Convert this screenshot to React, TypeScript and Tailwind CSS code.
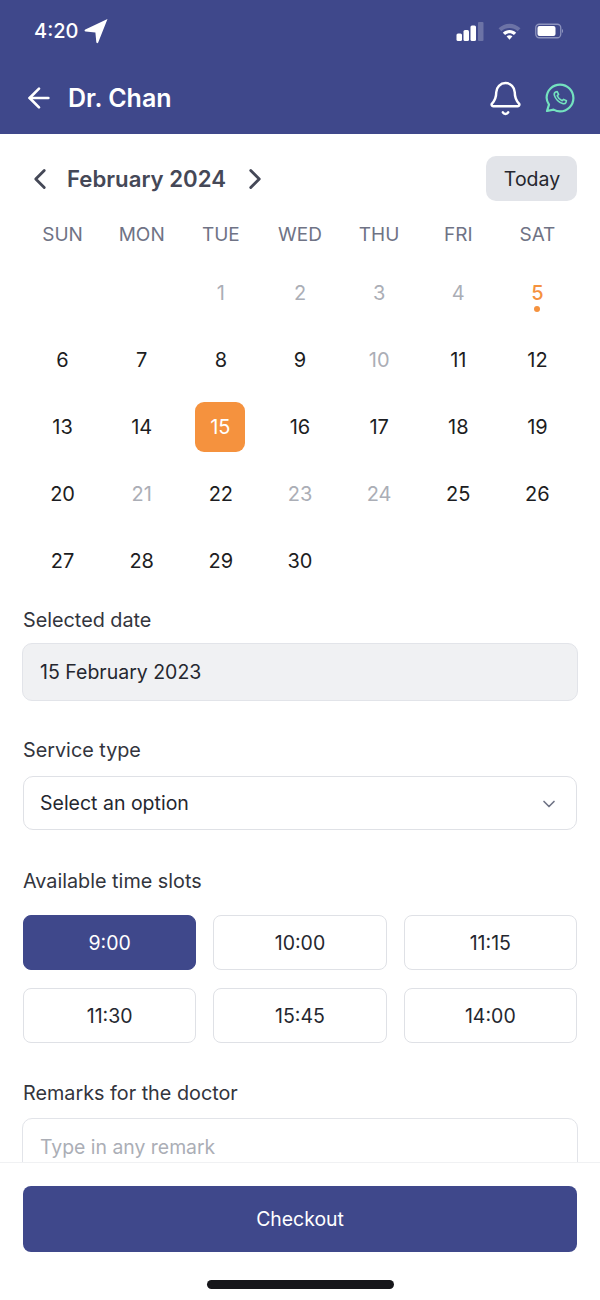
import { ArrowLeft, Bell, ChevronDown, ChevronLeft, ChevronRight } from 'lucide-react'

const weekDays = ['SUN', 'MON', 'TUE', 'WED', 'THU', 'FRI', 'SAT']
const disabledDays = [1, 2, 3, 4, 10, 21, 23, 24]
const timeSlots = ['9:00', '10:00', '11:15', '11:30', '15:45', '14:00']

function StatusBar() {
  return (
    <div className="flex h-[62px] items-center justify-between pl-[34px] pr-[36px] text-white">
      <div className="flex items-center gap-[6px]">
        <span className="text-[20px] font-medium leading-none">4:20</span>
        <svg viewBox="0 0 24 26" className="h-[26px] w-[24px]" fill="currentColor">
          <path d="M23.5 1 L14.2 24.4 C13.7 25.6 12.4 25.3 12.3 24 L11.4 14.4 L1.6 13.4 C0.4 13.3 0.2 12 1.3 11.4 Z" />
        </svg>
      </div>
      <div className="flex items-center gap-[14px]">
        <svg viewBox="0 0 28 19" className="ml-[1px] h-[19px] w-[28px]">
          <rect x="0.5" y="11.5" width="5.5" height="7.5" rx="1.5" fill="#fff" />
          <rect x="7.5" y="8" width="5.5" height="11" rx="1.5" fill="#fff" />
          <rect x="14.5" y="3.5" width="5.5" height="15.5" rx="1.5" fill="#fff" />
          <rect x="22" y="0" width="5.5" height="19" rx="1" fill="#6c73a6" />
        </svg>
        <svg viewBox="0 0 22 18" className="h-[19px] w-[23px]">
          <path d="M0.5 6 C6.3 0 15.7 0 21.5 6 L18.8 8.8 C14.4 4.6 7.6 4.6 3.2 8.8 Z" fill="#6c73a6" />
          <path d="M4.6 10.2 C8.2 6.8 13.8 6.8 17.4 10.2 L15.2 12.4 C12.6 10.2 9.4 10.2 6.8 12.4 Z" fill="#fff" />
          <path d="M8.2 13.6 C10 12.2 12 12.2 13.8 13.6 L11 17 Z" fill="#fff" />
        </svg>
        <svg viewBox="0 0 29 16" className="h-[16px] w-[29px]">
          <rect x="0.75" y="1.25" width="25" height="13.5" rx="3.5" fill="none" stroke="#8d93bd" strokeWidth="1.3" />
          <rect x="2.5" y="3" width="18" height="10" rx="2" fill="#fff" />
          <path d="M27 6 C28.4 6.4 28.4 9.6 27 10 Z" fill="#8d93bd" />
        </svg>
      </div>
    </div>
  )
}

function AppHeader() {
  return (
    <div className="flex h-[72px] items-center justify-between pl-[23px] pr-[24px] text-white">
      <div className="flex items-center gap-[13px]">
        <ArrowLeft size={32} strokeWidth={2} />
        <span className="text-[25px] font-semibold leading-none">Dr. Chan</span>
      </div>
      <div className="flex items-center gap-[20px]">
        <Bell size={37} strokeWidth={1.6} />
        <svg
          viewBox="0 0 32 32"
          className="h-[32px] w-[32px] text-[#74e2bf]"
          fill="none"
          stroke="currentColor"
          strokeWidth="2.2"
          strokeLinejoin="round"
          strokeLinecap="round"
        >
          <path d="M3 29 L5 22.6 C3.6 20.4 2.6 18.4 2.6 15.8 C2.6 8.6 8.6 2.6 16 2.6 C23.4 2.6 29.4 8.6 29.4 16 C29.4 23.4 23.4 29.4 16 29.4 C13.6 29.4 11.4 28.6 9.6 27.6 Z" />
          <path d="M11.6 10 C10.4 10.6 10 12 10.4 13.4 C11.4 17 15 20.6 18.6 21.6 C20 22 21.4 21.6 22 20.4 L22.4 18.8 L19.6 17.4 L18.2 18.8 C16.2 18 14 15.8 13.2 13.8 L14.6 12.4 L13.2 9.6 Z" strokeWidth="1.6" />
        </svg>
      </div>
    </div>
  )
}

function Calendar() {
  const days: (number | null)[] = [null, null, ...Array.from({ length: 30 }, (_, i) => i + 1)]

  return (
    <div>
      <div className="flex h-[45px] items-center justify-between">
        <div className="flex items-center text-[#454857]">
          <ChevronLeft size={34} strokeWidth={2} />
          <span className="ml-[10px] pt-[2px] text-[22.2px] font-semibold leading-none">February 2024</span>
          <ChevronRight size={34} strokeWidth={2} className="ml-[12px]" />
        </div>
        <button
          type="button"
          className="flex h-[45px] w-[91px] items-center justify-center rounded-[10px] bg-[#e2e4e9] pl-[1px] pt-[2px] text-[19.5px] text-[#25272f]"
        >
          Today
        </button>
      </div>
      <div className="mt-[20px] grid grid-cols-7">
        {weekDays.map((day) => (
          <div key={day} className="text-center text-[19px] leading-[28px] text-[#6f7385]">
            {day}
          </div>
        ))}
      </div>
      <div className="mt-[11px] grid grid-cols-7 auto-rows-[66.8px]">
        {days.map((day, index) => {
          if (day === null) return <div key={index} />
          if (day === 15) {
            return (
              <div key={day} className="flex items-center justify-center pr-[2px]">
                <div className="flex h-[50px] w-[50px] items-center justify-center rounded-[9px] bg-[#f5923e] pl-[1px] text-[20px] text-white">
                  15
                </div>
              </div>
            )
          }
          if (day === 5) {
            return (
              <div key={day} className="relative flex items-center justify-center text-[20px] font-medium text-[#f5923e]">
                5
                <span className="absolute left-1/2 top-[46px] h-[6px] w-[6px] -translate-x-1/2 rounded-full bg-[#f5923e]" />
              </div>
            )
          }
          const muted = disabledDays.includes(day)
          return (
            <div
              key={day}
              className={`flex items-center justify-center text-[20px] ${muted ? 'text-[#abaeb6]' : 'text-[#1c1d22]'}`}
            >
              {day}
            </div>
          )
        })}
      </div>
    </div>
  )
}

export default function App() {
  return (
    <div
      className="flex h-[1300px] w-[600px] flex-col overflow-hidden bg-white"
      style={{ fontFamily: 'Inter, "Liberation Sans", sans-serif' }}
    >
      <div className="bg-[#3f488b]">
        <StatusBar />
        <AppHeader />
      </div>

      <div className="min-h-0 flex-1 overflow-hidden">
        <div className="px-[23px] pt-[22px]">
          <Calendar />
        </div>

        <div className="mt-[12px] px-[23px]">
          <label className="block text-[19.8px] leading-[28px] text-[#33353d]">Selected date</label>
          <div className="ml-[-1px] mr-[-1px] mt-[9px] flex h-[58px] items-center rounded-[10px] border border-[#e2e4e9] bg-[#f0f1f3] pl-[17px] pr-[17px] pt-[2px] text-[19.5px] text-[#25272f]">
            15 February 2023
          </div>
        </div>

        <div className="mt-[35px] px-[23px]">
          <label className="block text-[19.8px] leading-[28px] text-[#33353d]">Service type</label>
          <div className="mt-[12px] flex h-[54px] items-center justify-between rounded-[10px] border border-[#dfe1e6] bg-white pl-[16px] pr-[17px] pt-[2px] text-[19.5px] text-[#25272f]">
            Select an option
            <ChevronDown size={20} strokeWidth={2} className="text-[#6f7385]" />
          </div>
        </div>

        <div className="mt-[37px] px-[23px]">
          <label className="block pt-[1px] text-[19.8px] leading-[27px] text-[#33353d]">Available time slots</label>
          <div className="mt-[20px] grid grid-cols-3 gap-x-[17px] gap-y-[18px]">
            {timeSlots.map((slot, index) => (
              <button
                key={slot}
                type="button"
                className={`h-[55px] rounded-[8px] border pt-[2px] text-[19.5px] ${
                  index === 0
                    ? 'border-[#3f488b] bg-[#3f488b] text-white'
                    : 'border-[#dfe1e6] bg-white text-[#25272f]'
                }`}
              >
                {slot}
              </button>
            ))}
          </div>
        </div>

        <div className="mt-[36px] px-[23px]">
          <label className="block text-[19.8px] leading-[28px] text-[#33353d]">Remarks for the doctor</label>
          <div className="ml-[-1px] mr-[-1px] mt-[11px] flex h-[90px] items-start rounded-[10px] border border-[#e2e4e9] bg-white px-[17px] pt-[14px] text-[19.4px] text-[#abaeb6]">
            Type in any remark
          </div>
        </div>
      </div>

      <div className="flex h-[138px] flex-col items-center border-t border-[#f0f1f3] bg-white px-[23px] pt-[23px]">
        <button
          type="button"
          className="h-[66px] w-full rounded-[8px] bg-[#3f488b] pt-[2px] text-[19.4px] text-white"
        >
          Checkout
        </button>
        <div className="mt-[28px] h-[9px] w-[187px] rounded-full bg-[#16161a]" />
      </div>
    </div>
  )
}
